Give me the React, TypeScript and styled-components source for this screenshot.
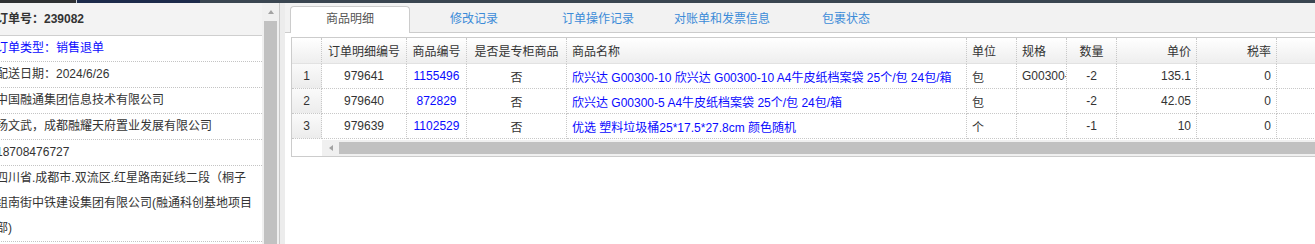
import React from 'react';
import styled, { createGlobalStyle } from 'styled-components';

const GlobalStyle = createGlobalStyle`
  html, body { margin: 0; padding: 0; background: #fff; overflow: hidden; }
  body {
    font-family: "Liberation Sans", "Noto Sans CJK SC", sans-serif;
    font-size: 12px;
    color: #333;
  }
  * { box-sizing: border-box; }
`;

const Page = styled.div`
  width: 1315px;
  height: 244px;
  display: flex;
  flex-direction: column;
  overflow: hidden;
  background: #fff;
`;

const TopStrip = styled.div`
  display: flex;
  height: 3px;
  flex-shrink: 0;
`;

const StripSeg = styled.div<{ $w?: number; $c: string }>`
  background: ${(p) => p.$c};
  ${(p) => (p.$w ? `width: ${p.$w}px;` : 'flex: 1;')}
`;

const Main = styled.div`
  display: flex;
  flex: 1;
  min-height: 0;
`;

const LeftPanel = styled.div`
  width: 262px;
  flex-shrink: 0;
  overflow: hidden;
  background: #fff;
`;

const LeftInner = styled.div`
  margin-left: -4px;
`;

const OrderHeader = styled.div`
  height: 33px;
  line-height: 32px;
  background: #f3f3f3;
  border-bottom: 1px solid #cfcfcf;
  font-weight: bold;
  color: #333;
  white-space: nowrap;
`;

const InfoRow = styled.div<{ $link?: boolean }>`
  line-height: 25px;
  border-bottom: 1px dotted #c4c4c4;
  padding-right: 8px;
  color: ${(p) => (p.$link ? '#0a0aff' : '#333')};
`;

const VScroll = styled.div`
  width: 17px;
  flex-shrink: 0;
  background: #f0f0f0;
  display: flex;
  flex-direction: column;
  align-items: center;
`;

const ScrollBtn = styled.div`
  height: 18px;
  width: 100%;
  display: flex;
  align-items: center;
  justify-content: center;
`;

const UpTriangle = styled.div`
  width: 0;
  height: 0;
  border-left: 3.5px solid transparent;
  border-right: 3.5px solid transparent;
  border-bottom: 4px solid #a3a3a3;
`;

const LeftTriangle = styled.div`
  width: 0;
  height: 0;
  border-top: 3.5px solid transparent;
  border-bottom: 3.5px solid transparent;
  border-right: 4px solid #a3a3a3;
`;

const VThumb = styled.div`
  flex: 1;
  width: 13px;
  background: #c1c1c1;
`;

const Splitter = styled.div`
  width: 6px;
  flex-shrink: 0;
  border-left: 1px solid #c9c9c9;
  background: #ececec;
`;

const RightPanel = styled.div`
  flex: 1;
  min-width: 0;
  display: flex;
  flex-direction: column;
  overflow: hidden;
  background: #fff;
`;

const TabBar = styled.div`
  height: 30px;
  flex-shrink: 0;
  background: #f2f2f2;
  border-bottom: 1px solid #cccccc;
  display: flex;
  align-items: flex-end;
  padding-left: 5px;
  gap: 4px;
`;

const Tab = styled.div<{ $active?: boolean }>`
  width: 120px;
  height: 27px;
  margin-bottom: -1px;
  border: 1px solid ${(p) => (p.$active ? '#cccccc' : 'transparent')};
  border-bottom: none;
  border-radius: 4px 4px 0 0;
  background: ${(p) => (p.$active ? '#ffffff' : 'transparent')};
  color: ${(p) => (p.$active ? '#555555' : '#3b8bd8')};
  text-align: center;
  line-height: 25px;
  white-space: nowrap;
`;

const TabContent = styled.div`
  flex: 1;
  padding: 4px 0 0 6px;
  background: #fff;
`;

const GridBox = styled.div`
  width: 1100px;
  border: 1px solid #cccccc;
  overflow: hidden;
`;

const Table = styled.table`
  border-collapse: separate;
  border-spacing: 0;
  table-layout: fixed;
  width: 1098px;
`;

type Align = 'left' | 'center' | 'right';

const HeadCell = styled.th<{ $align?: Align }>`
  height: 26px;
  padding: 0 5px;
  font-weight: normal;
  color: #333;
  text-align: ${(p) => p.$align ?? 'center'};
  background: linear-gradient(#ffffff, #eeeeee);
  border-right: 1px dotted #c8c8c8;
  border-bottom: 1px solid #e2e2e2;
  white-space: nowrap;
  overflow: hidden;
`;

const Cell = styled.td<{ $align?: Align; $link?: boolean; $num?: boolean }>`
  height: 25px;
  padding: 0 5px;
  text-align: ${(p) => p.$align ?? 'center'};
  color: ${(p) => (p.$link ? '#0a0aff' : '#333')};
  background: ${(p) => (p.$num ? 'linear-gradient(#fafafa, #ececec)' : '#fff')};
  border-right: 1px dotted #c8c8c8;
  border-bottom: 1px dotted #c8c8c8;
  white-space: nowrap;
  overflow: hidden;
`;

const HScrollRow = styled.div`
  display: flex;
  height: 17px;
  padding-top: 1px;
  background: #fff;
`;

const HScrollSpacer = styled.div`
  width: 30px;
  flex-shrink: 0;
  background: #fff;
`;

const HTrack = styled.div`
  flex: 1;
  display: flex;
  background: #f0f0f0;
`;

const HBtn = styled.div`
  width: 17px;
  flex-shrink: 0;
  display: flex;
  align-items: center;
  justify-content: center;
`;

const HThumb = styled.div`
  flex: 1;
  margin: 2px 0;
  background: #c1c1c1;
`;

const columns: { label: string; width: number; align: Align }[] = [
  { label: '', width: 30, align: 'center' },
  { label: '订单明细编号', width: 85, align: 'center' },
  { label: '商品编号', width: 60, align: 'center' },
  { label: '是否是专柜商品', width: 100, align: 'center' },
  { label: '商品名称', width: 400, align: 'left' },
  { label: '单位', width: 50, align: 'left' },
  { label: '规格', width: 50, align: 'left' },
  { label: '数量', width: 50, align: 'center' },
  { label: '单价', width: 80, align: 'right' },
  { label: '税率', width: 80, align: 'right' },
  { label: '', width: 113, align: 'left' },
];

const rows = [
  {
    n: 1,
    id: '979641',
    code: '1155496',
    special: '否',
    name: '欣兴达 G00300-10 欣兴达 G00300-10 A4牛皮纸档案袋 25个/包 24包/箱',
    unit: '包',
    spec: 'G00300-10',
    qty: '-2',
    price: '135.1',
    tax: '0',
  },
  {
    n: 2,
    id: '979640',
    code: '872829',
    special: '否',
    name: '欣兴达 G00300-5 A4牛皮纸档案袋 25个/包 24包/箱',
    unit: '包',
    spec: '',
    qty: '-2',
    price: '42.05',
    tax: '0',
  },
  {
    n: 3,
    id: '979639',
    code: '1102529',
    special: '否',
    name: '优选 塑料垃圾桶25*17.5*27.8cm 颜色随机',
    unit: '个',
    spec: '',
    qty: '-1',
    price: '10',
    tax: '0',
  },
];

const tabs = ['商品明细', '修改记录', '订单操作记录', '对账单和发票信息', '包裹状态'];

export default function App() {
  return (
    <>
      <GlobalStyle />
      <Page>
        <TopStrip>
          <StripSeg $w={76} $c="#2f3133" />
          <StripSeg $w={1} $c="#c9ced4" />
          <StripSeg $w={123} $c="#1c2b4b" />
          <StripSeg $c="#3a4651" />
        </TopStrip>
        <Main>
          <LeftPanel>
            <LeftInner>
              <OrderHeader>订单号：239082</OrderHeader>
              <InfoRow $link>订单类型：销售退单</InfoRow>
              <InfoRow>配送日期：2024/6/26</InfoRow>
              <InfoRow>中国融通集团信息技术有限公司</InfoRow>
              <InfoRow>杨文武，成都融耀天府置业发展有限公司</InfoRow>
              <InfoRow>18708476727</InfoRow>
              <InfoRow>
                四川省.成都市.双流区.红星路南延线二段（桐子组南街中铁建设集团有限公司(融通科创基地项目部)
              </InfoRow>
            </LeftInner>
          </LeftPanel>
          <VScroll>
            <ScrollBtn>
              <UpTriangle />
            </ScrollBtn>
            <VThumb />
          </VScroll>
          <Splitter />
          <RightPanel>
            <TabBar>
              {tabs.map((t, i) => (
                <Tab key={t} $active={i === 0}>
                  {t}
                </Tab>
              ))}
            </TabBar>
            <TabContent>
              <GridBox>
                <Table>
                  <colgroup>
                    {columns.map((c, i) => (
                      <col key={i} style={{ width: c.width }} />
                    ))}
                  </colgroup>
                  <thead>
                    <tr>
                      {columns.map((c, i) => (
                        <HeadCell key={i} $align={c.align}>
                          {c.label}
                        </HeadCell>
                      ))}
                    </tr>
                  </thead>
                  <tbody>
                    {rows.map((r) => (
                      <tr key={r.n}>
                        <Cell $num>{r.n}</Cell>
                        <Cell>{r.id}</Cell>
                        <Cell $link>{r.code}</Cell>
                        <Cell>{r.special}</Cell>
                        <Cell $align="left" $link>
                          {r.name}
                        </Cell>
                        <Cell $align="left">{r.unit}</Cell>
                        <Cell $align="left">{r.spec}</Cell>
                        <Cell>{r.qty}</Cell>
                        <Cell $align="right">{r.price}</Cell>
                        <Cell $align="right">{r.tax}</Cell>
                        <Cell />
                      </tr>
                    ))}
                  </tbody>
                </Table>
                <HScrollRow>
                  <HScrollSpacer />
                  <HTrack>
                    <HBtn>
                      <LeftTriangle />
                    </HBtn>
                    <HThumb />
                  </HTrack>
                </HScrollRow>
              </GridBox>
            </TabContent>
          </RightPanel>
        </Main>
      </Page>
    </>
  );
}
